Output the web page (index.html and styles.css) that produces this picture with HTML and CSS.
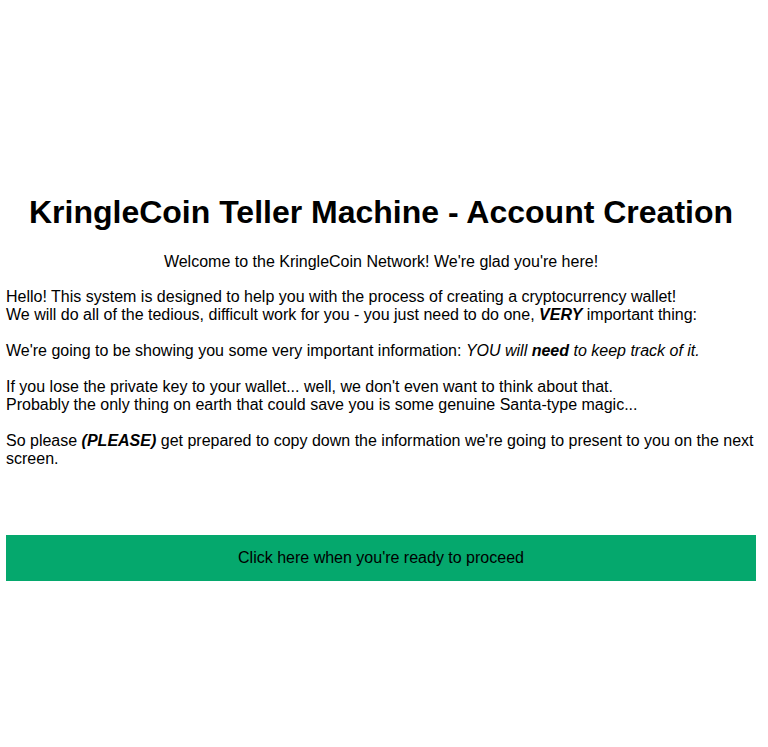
FILE: index.html
```html
<!DOCTYPE html>
<html>
<head>
<meta charset="utf-8">
<title>KringleCoin Teller Machine</title>
<link rel="stylesheet" href="styles.css">
</head>
<body>
<main class="page">
  <h1 class="title">KringleCoin Teller Machine - Account Creation</h1>
  <p class="welcome">Welcome to the KringleCoin Network! We're glad you're here!</p>
  <p class="info">Hello! This system is designed to help you with the process of creating a cryptocurrency wallet!<br>
  We will do all of the tedious, difficult work for you - you just need to do one, <b><i>VERY</i></b> important thing:<br>
  <br>
  We're going to be showing you some very important information: <i>YOU will <b>need</b> to keep track of it.</i><br>
  <br>
  If you lose the private key to your wallet... well, we don't even want to think about that.<br>
  Probably the only thing on earth that could save you is some genuine Santa-type magic...<br>
  <br>
  So please <b><i>(PLEASE)</i></b> get prepared to copy down the information we're going to present to you on the next screen.</p>
  <button class="proceed" type="button">Click here when you're ready to proceed</button>
</main>
</body>
</html>
```

FILE: styles.css
```css
html, body {
  margin: 0;
  padding: 0;
  background: #ffffff;
}

body {
  font-family: "Liberation Sans", Arial, sans-serif;
  font-size: 16px;
  color: #000000;
}

.page {
  display: flex;
  flex-direction: column;
  padding: 194px 12px 0 6px;
}

.title {
  font-size: 32px;
  font-weight: bold;
  text-align: center;
  margin: 0 0 22px 0;
}

.welcome {
  text-align: center;
  margin: 0 0 17px 0;
}

.info {
  margin: 0 0 67px 0;
}

.proceed {
  font-family: "Liberation Sans", Arial, sans-serif;
  font-size: 16px;
  color: #000000;
  background: #05a86d;
  border: none;
  height: 46px;
  padding: 0;
  width: 100%;
  cursor: pointer;
}
```
